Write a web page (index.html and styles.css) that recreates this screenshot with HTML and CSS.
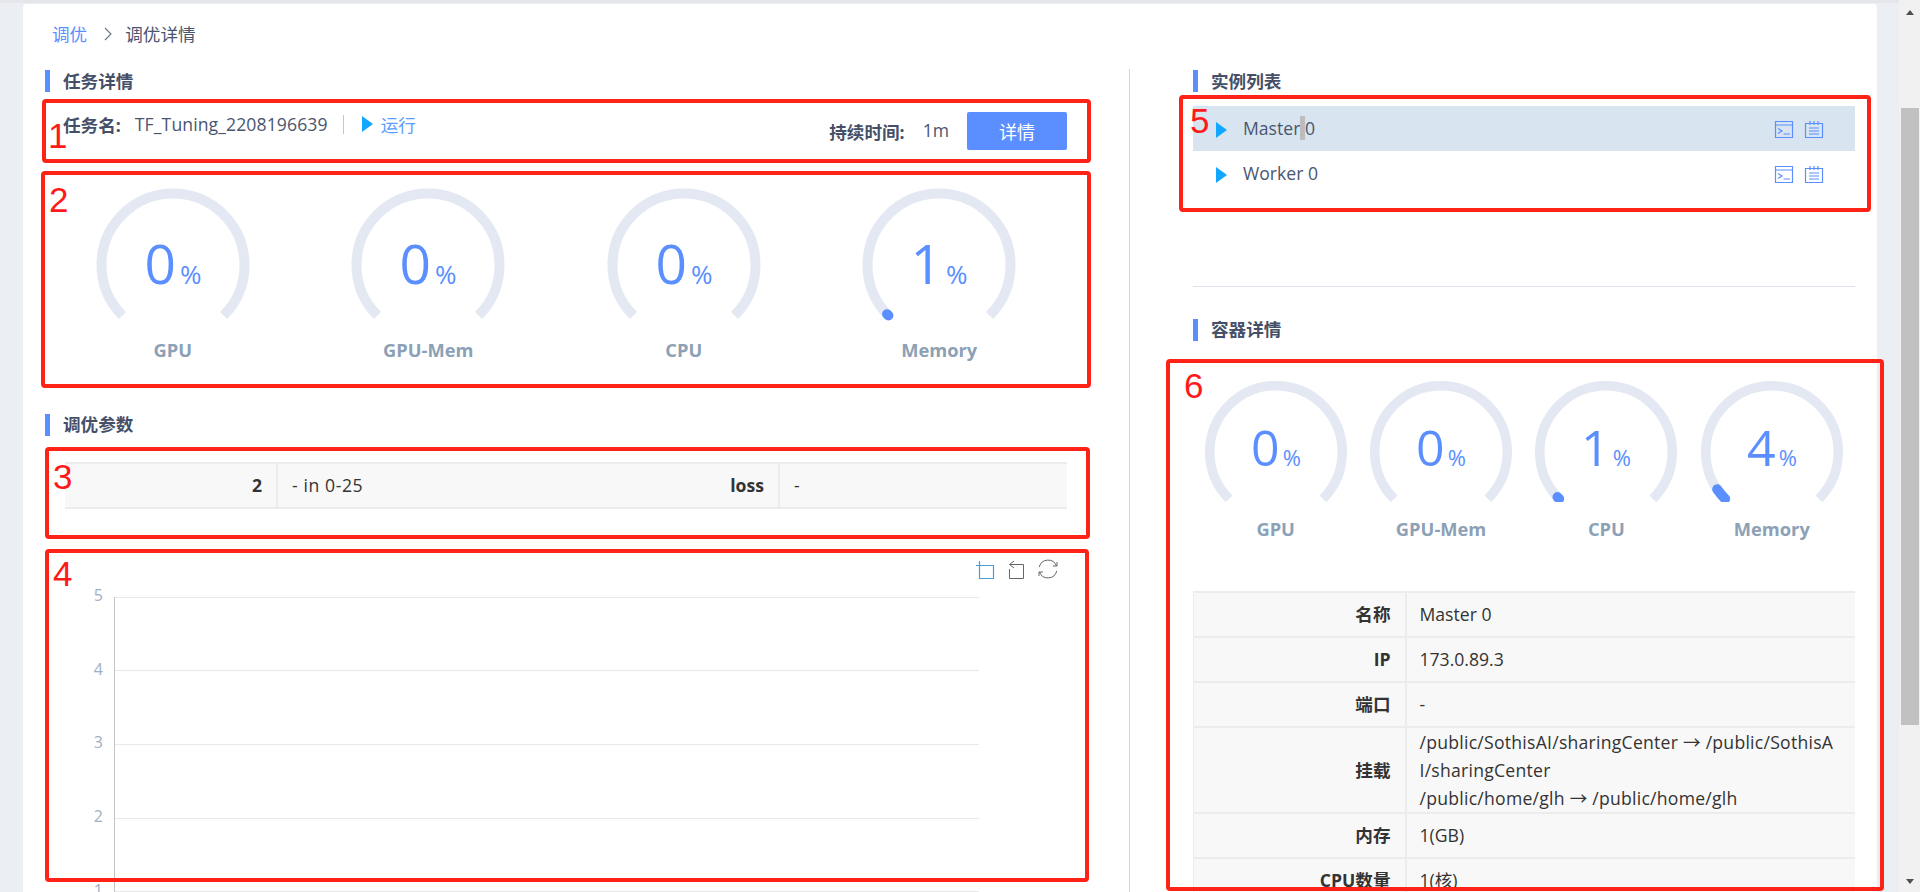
FILE: index.html
```html
<!DOCTYPE html>
<html lang="zh-CN">
<head>
<meta charset="utf-8">
<title>调优详情</title>
<link rel="stylesheet" href="styles.css">
</head>
<body>
<div class="page">
  <main class="main">
    <div class="card">
      <nav class="crumbs"><a class="crumb-link">调优</a><svg class="crumb-sep" viewBox="0 0 8 14" width="8" height="14"><path d="M1 1l6 6-6 6" fill="none" stroke="#6b7488" stroke-width="1.1"/></svg><span>调优详情</span></nav>
      <div class="columns">
        <section class="col-left">
          <h2 class="title">任务详情</h2>
          <div class="info">
            <div class="info-left">
              <b class="info-key">任务名:</b>
              <span class="info-name">TF_Tuning_2208196639</span>
              <i class="info-sep"></i>
              <i class="play"></i>
              <span class="run">运行</span>
            </div>
            <div class="info-right">
              <b class="info-key">持续时间:</b>
              <span class="info-time">1m</span>
              <button class="btn">详情</button>
            </div>
          </div>
          <div class="gauges gauges-big">
            <div class="gauge">
              <svg viewBox="0 0 160 140" width="160" height="140"><path class="track" d="M29.44 130.56A71.5 71.5 0 1 1 130.56 130.56"/><text class="val" x="80" y="99">0<tspan class="pct" dx="4">%</tspan></text></svg>
              <div class="gauge-label">GPU</div>
            </div>
            <div class="gauge">
              <svg viewBox="0 0 160 140" width="160" height="140"><path class="track" d="M29.44 130.56A71.5 71.5 0 1 1 130.56 130.56"/><text class="val" x="80" y="99">0<tspan class="pct" dx="4">%</tspan></text></svg>
              <div class="gauge-label">GPU-Mem</div>
            </div>
            <div class="gauge">
              <svg viewBox="0 0 160 140" width="160" height="140"><path class="track" d="M29.44 130.56A71.5 71.5 0 1 1 130.56 130.56"/><text class="val" x="80" y="99">0<tspan class="pct" dx="4">%</tspan></text></svg>
              <div class="gauge-label">CPU</div>
            </div>
            <div class="gauge">
              <svg viewBox="0 0 160 140" width="160" height="140"><path class="track" d="M29.44 130.56A71.5 71.5 0 1 1 130.56 130.56"/><path class="bar" pathLength="100" stroke-dasharray="0.6 200" d="M29.44 130.56A71.5 71.5 0 1 1 130.56 130.56"/><text class="val" x="80" y="99">1<tspan class="pct" dx="4">%</tspan></text></svg>
              <div class="gauge-label">Memory</div>
            </div>
          </div>
          <h2 class="title title-params">调优参数</h2>
          <table class="kv params">
            <colgroup><col class="c-a"><col class="c-b"><col class="c-c"><col class="c-d"></colgroup>
            <tr><th>2</th><td class="wide">- in 0-25</td><th>loss</th><td>-</td></tr>
          </table>
          <div class="chart">
            <svg viewBox="0 0 1022 337" width="1022" height="337">
              <g class="grid">
                <path d="M69 42.5H934"/><path d="M69 115.500H934"/><path d="M69 189.5H934"/><path d="M69 263.5H934"/><path d="M69 336.5H934"/>
              </g>
              <path class="axis" d="M69.5 42V337"/>
              <g class="tick">
                <text x="58" y="40">5</text><text x="58" y="114">4</text><text x="58" y="187">3</text><text x="58" y="261">2</text><text x="58" y="335">1</text>
              </g>
              <g class="tool tool-on"><path d="M931 10.5H949M934.5 6V23.5H948.5V10.5"/></g>
              <g class="tool"><path d="M969 6L964.500 9.500L969 13M965 9.500H978.500V23.500H964.500V14"/></g>
              <g class="tool"><path d="M994.300 12A9 9 0 0 1 1011.500 11M1011.700 16A9 9 0 0 1 994.500 17"/><path d="M1012 7V11H1008M994 21V17H998"/></g>
            </svg>
          </div>
        </section>
        <section class="col-right">
          <h2 class="title">实例列表</h2>
          <ul class="list">
            <li class="row row-on">
              <i class="play play-list"></i>
              <span class="row-name">Master<span class="sel"> </span>0</span>
              <svg class="ico" viewBox="0 0 18 17" width="18" height="17"><path d="M.5.500H17.500V16.500H.500ZM.5 4H17.500M3 7.500L7 10L3 12.500M8.500 13H15"/></svg>
              <svg class="ico" viewBox="0 0 18 17" width="18" height="17"><path d="M.5 2.500H17.500V16.500H.500ZM5 0V4M9 0V4M13 0V4M4 7H14M4 10H14M4 13H14"/></svg>
            </li>
            <li class="row">
              <i class="play play-list"></i>
              <span class="row-name">Worker 0</span>
              <svg class="ico" viewBox="0 0 18 17" width="18" height="17"><path d="M.5.500H17.500V16.500H.500ZM.5 4H17.500M3 7.500L7 10L3 12.500M8.500 13H15"/></svg>
              <svg class="ico" viewBox="0 0 18 17" width="18" height="17"><path d="M.5 2.500H17.500V16.500H.500ZM5 0V4M9 0V4M13 0V4M4 7H14M4 10H14M4 13H14"/></svg>
            </li>
          </ul>
          <hr class="rule">
          <h2 class="title title-container">容器详情</h2>
          <div class="gauges gauges-small">
            <div class="gauge">
              <svg viewBox="0 0 150 130" width="150" height="130"><path class="track track-s" d="M28.15 126.85A66.25 66.25 0 1 1 121.85 126.85"/><text class="val val-s" x="75" y="94">0<tspan class="pct pct-s" dx="3">%</tspan></text></svg>
              <div class="gauge-label">GPU</div>
            </div>
            <div class="gauge">
              <svg viewBox="0 0 150 130" width="150" height="130"><path class="track track-s" d="M28.15 126.85A66.25 66.25 0 1 1 121.85 126.85"/><text class="val val-s" x="75" y="94">0<tspan class="pct pct-s" dx="3">%</tspan></text></svg>
              <div class="gauge-label">GPU-Mem</div>
            </div>
            <div class="gauge">
              <svg viewBox="0 0 150 130" width="150" height="130"><path class="track track-s" d="M28.15 126.85A66.25 66.25 0 1 1 121.85 126.85"/><path class="bar track-s" pathLength="100" stroke-dasharray="0.8 200" d="M28.15 126.85A66.25 66.25 0 1 1 121.85 126.85"/><text class="val val-s" x="75" y="94">1<tspan class="pct pct-s" dx="3">%</tspan></text></svg>
              <div class="gauge-label">CPU</div>
            </div>
            <div class="gauge">
              <svg viewBox="0 0 150 130" width="150" height="130"><path class="track track-s" d="M28.15 126.85A66.25 66.25 0 1 1 121.85 126.85"/><path class="bar track-s" pathLength="100" stroke-dasharray="4 200" d="M28.15 126.85A66.25 66.25 0 1 1 121.85 126.85"/><text class="val val-s" x="75" y="94">4<tspan class="pct pct-s" dx="3">%</tspan></text></svg>
              <div class="gauge-label">Memory</div>
            </div>
          </div>
          <table class="kv details">
            <colgroup><col class="c-k"><col class="c-v"></colgroup>
            <tr><th>名称</th><td>Master 0</td></tr>
            <tr><th>IP</th><td>173.0.89.3</td></tr>
            <tr><th>端口</th><td>-</td></tr>
            <tr class="tall"><th>挂载</th><td>/public/SothisAI/sharingCenter → /public/SothisA<br>I/sharingCenter<br>/public/home/glh → /public/home/glh</td></tr>
            <tr><th>内存</th><td>1(GB)</td></tr>
            <tr><th>CPU数量</th><td>1(核)</td></tr>
          </table>
        </section>
      </div>
    </div>
  </main>
  <aside class="scrollbar">
    <div class="sb-top"><i class="sb-up"></i></div>
    <div class="sb-thumb"></div>
    <div class="sb-bottom"><i class="sb-down"></i></div>
  </aside>
  <div class="anno anno-1"><span>1</span></div>
  <div class="anno anno-2"><span>2</span></div>
  <div class="anno anno-3"><span>3</span></div>
  <div class="anno anno-4"><span>4</span></div>
  <div class="anno anno-5"><span>5</span></div>
  <div class="anno anno-6"><span>6</span></div>
</div>
</body>
</html>
```
FILE: styles.css
```css
* { box-sizing: border-box; }
html, body { margin: 0; height: 892px; overflow: hidden; }
body {
  background: #ebeff3;
  color: #4a5570;
  font-family: "Open Sans", "Noto Sans CJK SC", sans-serif;
  font-size: 17.6px;
}
.page { position: relative; display: flex; height: 892px; overflow: hidden; }
.main { flex: 1; min-width: 0; border-top: 3px solid #e4e6ea; padding: 1px 22px 0 23px; }
.card { background: #fff; border-radius: 4px 4px 0 0; height: 900px; padding: 0 23px 0 22px; }

.crumbs { display: flex; align-items: flex-start; height: 60px; margin-bottom: 5px; padding: 17px 0 0 7px; line-height: 26px; }
.crumb-link { color: #5b8fff; }
.crumb-sep { margin: 6px 13px 0 17px; }

.columns { display: grid; grid-template-columns: 1022px 1fr; }
.col-right { border-left: 1px solid #d4d4d4; margin-left: 62px; padding-left: 63px; min-height: 830px; }

.title {
  margin: 1px 0 0;
  height: 22px;
  line-height: 22px;
  font-size: 17.6px;
  font-weight: 700;
  color: #464f68;
  border-left: 5px solid #5b8fff;
  padding-left: 13px;
}
.title-params { margin-top: 52px; line-height: 20px; }
.title-container { margin-top: 32px; line-height: 20px; }

.info { display: flex; justify-content: space-between; margin-top: 20px; padding-left: 18px; height: 38px; }
.info-left { display: flex; align-items: center; height: 24px; }
.info-right { display: flex; align-items: center; height: 38px; }
.info-key { font-weight: 700; color: #464f68; }
.info-name { margin-left: 14px; letter-spacing: .1px; }
.info-sep { width: 1px; height: 19px; background: #c6c6c6; margin: 0 18px 0 15px; }
.play { width: 0; height: 0; border-style: solid; border-width: 8.5px 0 8.5px 11px; border-color: transparent transparent transparent #12a8ff; }
.run { color: #5b9cff; margin-left: 8px; }
.info-time { margin: -2px 18px 0 18px; }
.btn {
  width: 100px; height: 38px; border: 0; border-radius: 2px;
  background: #5b8fff; color: #fff; font: inherit; font-size: 18px; padding: 0;
}

.gauges { display: grid; grid-template-columns: repeat(4, 1fr); }
.gauges-big { margin-top: 35px; }
.gauges-small { margin-top: 31px; }
.gauge { display: flex; flex-direction: column; align-items: center; }
.gauge svg { display: block; }
.track { fill: none; stroke: #e4e8f2; stroke-width: 10; }
.track-s { stroke-width: 9.5; }
.bar { fill: none; stroke: #5b8fff; stroke-width: 10; stroke-linecap: round; }
.bar.track-s { stroke: #5b8fff; stroke-width: 10; }
.val { fill: #5b8fff; font-size: 55px; text-anchor: middle; }
.val-s { font-size: 50px; }
.pct { font-size: 26px; }
.pct-s { font-size: 22px; }
.gauge-label { margin-top: 13px; line-height: 24px; font-weight: 700; font-size: 18.3px; color: #8ca1b5; }
.gauges-small .gauge-label { margin-top: 15px; }

.kv { border-collapse: collapse; table-layout: fixed; background: #f8f8f8; color: #333; }
.kv th, .kv td { padding: 0 14px 2px; border-top: 2px solid #ececec; border-bottom: 2px solid #ececec; font-size: 17.6px; }
.kv th { text-align: right; font-weight: 700; border-right: 2px solid #ececec; }
.kv td { text-align: left; }
.kv .wide { letter-spacing: .6px; }
.params { margin: 26px 0 0 20px; width: 1002px; height: 47px; }
.c-a { width: 212px; } .c-b { width: 288px; } .c-c { width: 214px; } .c-d { width: 288px; }
.details { margin-top: 50px; width: 661px; border-left: 1px solid #ececec; }
.c-k { width: 212px; } .c-v { width: 449px; }
.details td { padding-left: 13px; }
.details tr { height: 45px; }
.details .tall { height: 86px; }
.details .tall td { line-height: 28px; padding: 0 0 0 13px; letter-spacing: .25px; }

.chart { margin-top: 46px; height: 337px; }
.chart svg { display: block; overflow: hidden; }
.grid path { stroke: #e8e8e8; stroke-width: 1; fill: none; }
.axis { stroke: #c4c4c4; stroke-width: 1; fill: none; }
.tick text { fill: #9fb0c2; font-size: 16px; text-anchor: end; dominant-baseline: central; }
.tool path { fill: none; stroke: #666; stroke-width: 1; }
.tool-on path { stroke: #4a9fcf; stroke-width: 1.2; }

.list { list-style: none; margin: 14px 0 0; padding: 0; }
.row { display: flex; align-items: center; height: 45px; padding: 0 32px 0 23px; }
.row-on { background: #d8e5f0; }
.play-list { border-width: 8px 0 8px 11.5px; margin-top: 2px; }
.row-name { margin: -2px auto 0 16px; }
.sel { background: #bcbcbc; }
.ico { margin-left: 12px; margin-top: 2px; overflow: visible; }
.ico path { fill: none; stroke: #5b8fff; stroke-width: 1.2; }

.rule { border: 0; border-top: 1px solid #dfe2ea; margin: 90px 0 0; }

.scrollbar { width: 21px; flex: none; background: #f1f1f1; display: flex; flex-direction: column; }
.sb-top { height: 108px; display: flex; justify-content: center; padding-top: 10px; }
.sb-thumb { height: 617px; width: 18px; margin-left: 2px; background: #c1c1c1; }
.sb-bottom { flex: 1; display: flex; justify-content: center; align-items: flex-end; padding-bottom: 8px; }
.sb-up { width: 0; height: 0; border-style: solid; border-width: 0 4.5px 5px; border-color: transparent transparent #505050; }
.sb-down { width: 0; height: 0; border-style: solid; border-width: 5px 4.5px 0; border-color: #505050 transparent transparent; }

.anno {
  position: absolute;
  border: 4px solid #ff2317;
  border-radius: 4px;
  font-family: "Liberation Sans", sans-serif;
  font-size: 35px;
  line-height: 35px;
  color: #ff1a1a;
}
.anno-1 { left: 42px; top: 99px; width: 1049px; height: 64px; padding: 15px 0 0 2px; }
.anno-2 { left: 41px; top: 171px; width: 1050px; height: 217px; padding: 7px 0 0 4px; }
.anno-3 { left: 45px; top: 447px; width: 1045px; height: 92px; padding: 8px 0 0 4px; }
.anno-4 { left: 45px; top: 549px; width: 1044px; height: 333px; padding: 3px 0 0 4px; }
.anno-5 { left: 1179px; top: 95px; width: 692px; height: 117px; padding: 4px 0 0 7px; }
.anno-6 { left: 1166px; top: 359px; width: 718px; height: 532px; padding: 5px 0 0 14px; }
```
